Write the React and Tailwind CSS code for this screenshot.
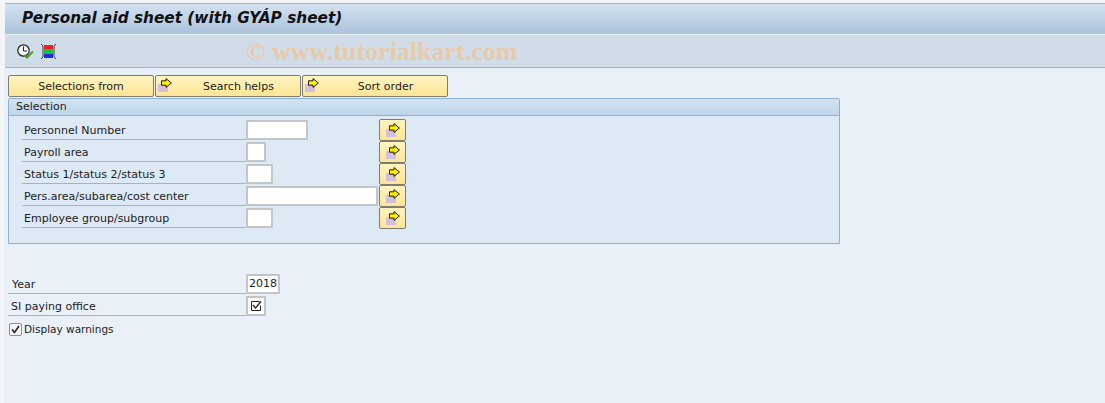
import React from "react";

const uiFont = "font-['DejaVu_Sans',sans-serif]";

// sap "execute" style arrow: yellow arrow over a lilac block
function ArrowIcon() {
  return (
    <svg width="14" height="14" viewBox="0 0 14 14" className="block">
      <rect x="0" y="6" width="10" height="8" fill="#d4c0dc" />
      <path
        d="M3.5 2.8h4.5V0.6L13.4 5 8 9.4V7.2H3.5z"
        fill="#ffee00"
        stroke="#1a1a1a"
        strokeWidth="1"
      />
    </svg>
  );
}

function ClockIcon() {
  return (
    <svg width="17" height="15" viewBox="0 0 17 15" className="block">
      <circle cx="6.5" cy="6.5" r="5.7" fill="#f4f4f4" stroke="#222" strokeWidth="1.2" />
      <path d="M6.5 2.5v4.5h3.5" fill="none" stroke="#222" strokeWidth="1" />
      <path d="M7.5 11l2.5 2.5 6-6" fill="none" stroke="#4f9a2c" strokeWidth="2" />
    </svg>
  );
}

function ColorsIcon() {
  return (
    <svg width="15" height="15" viewBox="0 0 15 15" className="block">
      <rect x="3" y="1" width="9" height="4" fill="#e8202a" />
      <rect x="3" y="5" width="9" height="5" fill="#18c23a" />
      <rect x="3" y="10" width="9" height="4" fill="#1c2fe0" />
      <path d="M0 0l2 2v11l-2 2M15 0l-2 2v11l2 2" fill="none" stroke="#111" strokeWidth="0.8" />
    </svg>
  );
}

function ToolbarButton({ label, icon }) {
  return (
    <div
      className={`relative flex h-[22px] w-[146px] items-center justify-center rounded-[2px] border border-[#7d7d72] bg-gradient-to-b from-[#fef4bf] to-[#fde596] pt-[2px] text-[11px] text-[#1c1c1c] ${icon ? "pl-[21px]" : ""}`}
    >
      {icon && (
        <span className="absolute left-[2px] top-[2px]">
          <ArrowIcon />
        </span>
      )}
      {label}
    </div>
  );
}

function Field({ w, children }) {
  return (
    <div
      className={`flex h-[20px] shrink-0 items-center justify-center rounded-[1px] border-2 border-[#c2c6cb] bg-white text-[11px] text-[#1c1c1c] ${w}`}
    >
      {children}
    </div>
  );
}

function SelectionRow({ label, w }) {
  return (
    <div className="flex h-[22px] items-start">
      <div className="h-[20px] w-[224px] shrink-0 border-b border-[#a9b1ba] pl-[2px] text-[11px] leading-[21px] text-[#1c1c1c]">
        {label}
      </div>
      <div className="w-[133px] shrink-0">
        <Field w={w} />
      </div>
      <div className="-mt-[1px] flex h-[22px] w-[27px] shrink-0 items-center justify-center rounded-[2px] border border-[#7d7d72] bg-gradient-to-b from-[#fef4bf] to-[#fde596]">
        <ArrowIcon />
      </div>
    </div>
  );
}

const rows = [
  { label: "Personnel Number", w: "w-[62px]" },
  { label: "Payroll area", w: "w-[20px]" },
  { label: "Status 1/status 2/status 3", w: "w-[27px]" },
  { label: "Pers.area/subarea/cost center", w: "w-[132px]" },
  { label: "Employee group/subgroup", w: "w-[27px]" },
];

export default function App() {
  return (
    <div className={`relative h-[403px] w-[1105px] overflow-hidden bg-[#f3f5f8] pl-[5px] pt-[3px] ${uiFont}`}>
      <div className="h-[1px] bg-[#a9b5c2]" />

      {/* title bar */}
      <div className="flex h-[30px] items-center bg-gradient-to-b from-[#d5e2f0] to-[#aac2dc] pb-[2px] pl-[17px]">
        <h1 className="text-[15.3px] font-bold italic text-[#111]">
          Personal aid sheet (with GYÁP sheet)
        </h1>
      </div>
      <div className="h-[1px] bg-[#eef3f8]" />

      {/* app toolbar */}
      <div className="flex h-[33px] items-center gap-[7px] border-b border-[#a5b3c1] bg-[#d0dde8] pl-[12px]">
        <ClockIcon />
        <ColorsIcon />
      </div>

      <div className="-ml-[1px] h-[335px] bg-[#e9f0f8] pl-[4px] pt-[7px]">
        <div className="flex gap-[1px]">
          <ToolbarButton label="Selections from" />
          <ToolbarButton label="Search helps" icon />
          <ToolbarButton label="Sort order" icon />
        </div>

        {/* selection block */}
        <div className="mt-[1px] h-[146px] w-[832px] rounded-t-[2px] border border-[#8fb0d0] bg-[#dde9f4]">
          <div className="h-[17px] border-b border-[#8fb0d0] bg-gradient-to-b from-[#d3e3f3] to-[#bdd4ea] pl-[7px] text-[11px] leading-[16px] text-[#1c1c1c]">
            Selection
          </div>
          <div className="pl-[13px] pt-[4px]">
            {rows.map((row) => (
              <SelectionRow key={row.label} label={row.label} w={row.w} />
            ))}
          </div>
        </div>

        {/* parameters */}
        <div className="mt-[30px] flex h-[22px] items-start">
          <div className="h-[20px] w-[238px] shrink-0 border-b border-[#a9b1ba] pl-[4px] text-[11px] leading-[21px] text-[#1c1c1c]">
            Year
          </div>
          <Field w="w-[34px] pt-[1px]">2018</Field>
        </div>
        <div className="flex h-[22px] items-start">
          <div className="h-[20px] w-[238px] shrink-0 border-b border-[#a9b1ba] pl-[3px] text-[11px] leading-[21px] text-[#1c1c1c]">
            SI paying office
          </div>
          <Field w="w-[20px]">
            <svg width="12" height="12" viewBox="0 0 12 12" className="block">
              <path d="M9.5 1.5h-8v9h9v-5" fill="none" stroke="#222" strokeWidth="1" />
              <path d="M3 5l2.5 3L11 1.5" fill="none" stroke="#222" strokeWidth="1.3" />
            </svg>
          </Field>
        </div>
        <div className="flex items-center pl-[1px] pt-[4px] text-[10.5px] leading-[14px] text-[#1c1c1c]">
          <span className="flex h-[13px] w-[13px] items-center justify-center rounded-[2px] border border-[#8a8f96] bg-[#f4f4f6]">
            <svg width="9" height="9" viewBox="0 0 9 9" className="block">
              <path d="M1 4.5l2.5 3L8 1" fill="none" stroke="#222" strokeWidth="1.6" />
            </svg>
          </span>
          <span className="ml-[2px]">Display warnings</span>
        </div>
      </div>

      {/* watermark over the page */}
      <div className="absolute left-[246px] top-[37px] font-['Liberation_Serif',serif] text-[26px] leading-[30px] font-bold text-[#e8c9a8]">
        © www.tutorialkart.com
      </div>
    </div>
  );
}
